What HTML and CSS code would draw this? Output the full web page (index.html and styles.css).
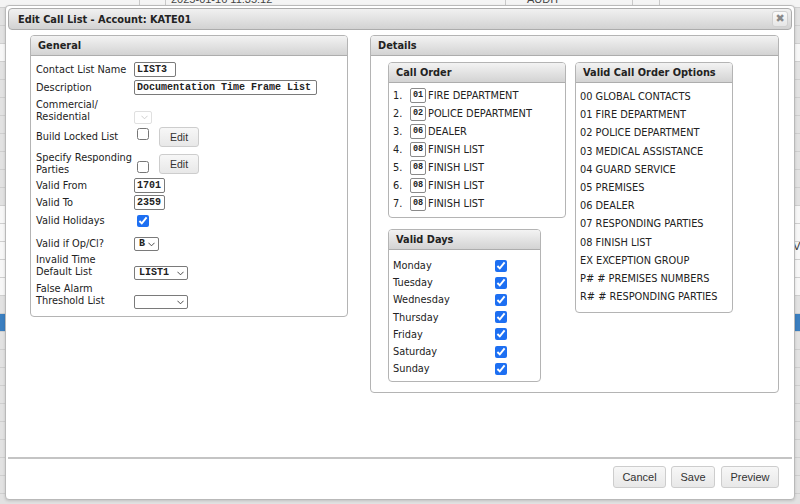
FILE: index.html
```html
<!DOCTYPE html>
<html>
<head>
<meta charset="utf-8">
<link rel="stylesheet" href="styles.css">
</head>
<body>
<div class="page">
  <div class="pg-row pg-top">
    <span class="pc pc1"></span><span class="pc pc2"></span><span class="pc pc3">2025-01-16 11:35:12</span><span class="pc pc4">AUDIT</span><span class="pc pc5"></span><span class="pc pc6"></span>
  </div>
  <div class="pg-row"></div>
  <div class="pg-row"></div>
  <div class="pg-row pg-white"></div>
  <div class="pg-row"></div>
  <div class="pg-row"></div>
  <div class="pg-row"></div>
  <div class="pg-row"></div>
  <div class="pg-row"></div>
  <div class="pg-row"></div>
  <div class="pg-row"></div>
  <div class="pg-row"></div>
  <div class="pg-row pg-white"></div>
  <div class="pg-row pg-white"></div>
  <div class="pg-row pg-text">Valid</div>
  <div class="pg-row pg-white"></div>
  <div class="pg-row pg-white"></div>
  <div class="pg-row"></div>
  <div class="pg-row pg-blue"></div>
  <div class="pg-row"></div>
  <div class="pg-row"></div>
  <div class="pg-row"></div>
  <div class="pg-row"></div>
  <div class="pg-row"></div>
  <div class="pg-row"></div>
  <div class="pg-row"></div>
  <div class="pg-row"></div>
  <div class="pg-row"></div>
  <div class="pg-row"></div>
</div>

<div class="dialog">
  <div class="titlebar">
    <span class="title">Edit Call List - Account: KATE01</span>
    <span class="close">✖</span>
  </div>

  <div class="content">
    <section class="panel general">
      <div class="panel-head">General</div>
      <div class="panel-body form">
        <div class="frow">
          <label class="flabel">Contact List Name</label>
          <span class="tinput w42">LIST3</span>
        </div>
        <div class="frow">
          <label class="flabel">Description</label>
          <span class="tinput w183">Documentation Time Frame List</span>
        </div>
        <div class="frow two r3">
          <label class="flabel">Commercial/<br>Residential</label>
          <span class="sel sel-dis w18"><svg class="chev" viewBox="0 0 8 5" width="7" height="5"><path d="M0.5 0.5 L4 4 L7.5 0.5" fill="none" stroke="#c8c8c8" stroke-width="1"/></svg></span>
        </div>
        <div class="frow r4">
          <label class="flabel">Build Locked List</label>
          <span class="ctrls"><input type="checkbox" class="cb cb-up"><button class="btn edit">Edit</button></span>
        </div>
        <div class="frow two r5">
          <label class="flabel">Specify Responding<br>Parties</label>
          <span class="ctrls"><input type="checkbox" class="cb cb-down"><button class="btn edit">Edit</button></span>
        </div>
        <div class="frow">
          <label class="flabel">Valid From</label>
          <span class="tinput w31">1701</span>
        </div>
        <div class="frow r7">
          <label class="flabel">Valid To</label>
          <span class="tinput w31">2359</span>
        </div>
        <div class="frow r8">
          <label class="flabel">Valid Holidays</label>
          <span class="ctrls"><input type="checkbox" class="cb" checked></span>
        </div>
        <div class="frow r9">
          <label class="flabel">Valid if Op/Cl?</label>
          <span class="sel w25">B<svg class="chev" viewBox="0 0 8 5" width="7" height="5"><path d="M0.5 0.5 L4 4 L7.5 0.5" fill="none" stroke="#333" stroke-width="1"/></svg></span>
        </div>
        <div class="frow two low">
          <label class="flabel">Invalid Time<br>Default List</label>
          <span class="sel w54">LIST1<svg class="chev" viewBox="0 0 8 5" width="7" height="5"><path d="M0.5 0.5 L4 4 L7.5 0.5" fill="none" stroke="#333" stroke-width="1"/></svg></span>
        </div>
        <div class="frow two low">
          <label class="flabel">False Alarm<br>Threshold List</label>
          <span class="sel w54"><svg class="chev" viewBox="0 0 8 5" width="7" height="5"><path d="M0.5 0.5 L4 4 L7.5 0.5" fill="none" stroke="#333" stroke-width="1"/></svg></span>
        </div>
      </div>
    </section>

    <section class="panel details">
      <div class="panel-head">Details</div>
      <div class="panel-body details-body">
        <div class="dcol">
          <section class="panel sub callorder">
            <div class="panel-head">Call Order</div>
            <div class="panel-body co-body">
              <div class="co-row"><span class="num">1.</span><span class="code">01</span><span>FIRE DEPARTMENT</span></div>
              <div class="co-row"><span class="num">2.</span><span class="code">02</span><span>POLICE DEPARTMENT</span></div>
              <div class="co-row"><span class="num">3.</span><span class="code">06</span><span>DEALER</span></div>
              <div class="co-row"><span class="num">4.</span><span class="code">08</span><span>FINISH LIST</span></div>
              <div class="co-row"><span class="num">5.</span><span class="code">08</span><span>FINISH LIST</span></div>
              <div class="co-row"><span class="num">6.</span><span class="code">08</span><span>FINISH LIST</span></div>
              <div class="co-row"><span class="num">7.</span><span class="code">08</span><span>FINISH LIST</span></div>
            </div>
          </section>
          <section class="panel sub days">
            <div class="panel-head">Valid Days</div>
            <div class="panel-body days-body">
              <div class="day"><span class="dname">Monday</span><input type="checkbox" class="cb" checked></div>
              <div class="day"><span class="dname">Tuesday</span><input type="checkbox" class="cb" checked></div>
              <div class="day"><span class="dname">Wednesday</span><input type="checkbox" class="cb" checked></div>
              <div class="day"><span class="dname">Thursday</span><input type="checkbox" class="cb" checked></div>
              <div class="day"><span class="dname">Friday</span><input type="checkbox" class="cb" checked></div>
              <div class="day"><span class="dname">Saturday</span><input type="checkbox" class="cb" checked></div>
              <div class="day"><span class="dname">Sunday</span><input type="checkbox" class="cb" checked></div>
            </div>
          </section>
        </div>
        <section class="panel sub options">
          <div class="panel-head">Valid Call Order Options</div>
          <ul class="panel-body opt-list">
            <li>00 GLOBAL CONTACTS</li>
            <li>01 FIRE DEPARTMENT</li>
            <li>02 POLICE DEPARTMENT</li>
            <li>03 MEDICAL ASSISTANCE</li>
            <li>04 GUARD SERVICE</li>
            <li>05 PREMISES</li>
            <li>06 DEALER</li>
            <li>07 RESPONDING PARTIES</li>
            <li>08 FINISH LIST</li>
            <li>EX EXCEPTION GROUP</li>
            <li>P# # PREMISES NUMBERS</li>
            <li>R# # RESPONDING PARTIES</li>
          </ul>
        </section>
      </div>
    </section>
  </div>

  <div class="footer">
    <button class="btn fbtn b-cancel">Cancel</button>
    <button class="btn fbtn b-save">Save</button>
    <button class="btn fbtn b-preview">Preview</button>
  </div>
</div>
</body>
</html>
```

FILE: styles.css
```css
* { box-sizing: border-box; }

html, body {
  margin: 0;
  padding: 0;
  width: 800px;
  height: 504px;
  overflow: hidden;
}

body {
  background: #e4e4e4;
  font-family: "DejaVu Sans", Verdana, sans-serif;
  font-size: 10px;
  color: #222;
  position: relative;
}

/* ---------- background page ---------- */
.page {
  display: flex;
  flex-direction: column;
  margin-top: -10px;
}
.pg-row {
  flex: none;
  height: 18px;
  background: #e2e2e2;
  border-bottom: 1px solid #cfcfcf;
  display: flex;
}
.pg-top {
  background: #f4f4f4;
  font-family: "Liberation Sans", Arial, sans-serif;
  font-size: 11px;
  color: #444;
}
.pg-white { background: #f7f7f7; }
.pg-blue { background: #3b7fc0; }
.pg-text {
  padding-left: 793px;
  font-size: 11px;
  color: #444;
  line-height: 10px;
  background: #f7f7f7;
}
.pc { height: 100%; border-right: 1px solid #c9c9c9; line-height: 18px; }
.pc1 { width: 140px; }
.pc2 { width: 26px; }
.pc3 { width: 340px; padding-left: 5px; }
.pc4 { width: 127px; padding-left: 21px; }
.pc5 { width: 27px; }
.pc6 { flex: 1; border-right: none; }

/* ---------- dialog ---------- */
.dialog {
  position: absolute;
  left: 5px;
  top: 5px;
  width: 790px;
  height: 495px;
  background: #fff;
  border: 1px solid #b9b9b9;
  border-radius: 4px;
  padding: 2px;
  display: flex;
  flex-direction: column;
  box-shadow: 0 1px 3px rgba(0,0,0,0.15);
}

.titlebar {
  height: 22px;
  border: 1px solid #acacac;
  border-radius: 4px;
  background: linear-gradient(#f1f1f1, #d2d2d2);
  display: flex;
  align-items: center;
  justify-content: space-between;
  padding: 0 3px 0 9px;
  flex: none;
}
.title {
  font-weight: bold;
  font-size: 9.8px;
  color: #222;
}
.close {
  width: 16px;
  height: 16px;
  border: 1px solid #d0d0d0;
  border-radius: 3px;
  background: linear-gradient(#fafafa, #e6e6e6);
  color: #8a8a8a;
  font-size: 11px;
  line-height: 14px;
  text-align: center;
}

.content {
  flex: 1;
  display: flex;
  align-items: flex-start;
  gap: 22px;
  padding: 5px 0 0 22px;
}

/* ---------- panels ---------- */
.panel {
  border: 1px solid #b4b4b4;
  border-radius: 4px;
  background: #fff;
  overflow: hidden;
}
.panel-head {
  height: 20px;
  line-height: 19px;
  background: linear-gradient(#f3f3f3, #d3d3d3);
  border-bottom: 1px solid #adadad;
  font-weight: bold;
  font-size: 9.8px;
  color: #222;
  padding-left: 7px;
}
.panel-body { margin: 0; }

.general { width: 318px; }
.details { width: 409px; }

/* ---------- general form ---------- */
.form {
  display: flex;
  flex-direction: column;
  gap: 3px;
  padding: 6px 0 7px 5px;
}
.frow {
  display: flex;
  align-items: center;
}
.frow.low { align-items: flex-end; height: 26px; }
.frow.low .flabel { align-self: flex-start; }
.frow.r3 { margin-top: 1px; align-items: flex-end; height: 25px; }
.frow.r3 .flabel { align-self: flex-start; }
.frow.r4 { height: 20px; }
.frow.r5 { margin-top: 2px; height: 23px; }
.frow.r7 { margin-top: -1px; }
.frow.r8 { margin-top: 1px; height: 14px; }
.frow.r9 { margin-top: 6px; }
.flabel {
  width: 98px;
  flex: none;
  line-height: 12px;
  font-size: 9.8px;
  color: #222;
}
.tinput {
  height: 15px;
  border: 1px solid #7a7a7a;
  border-radius: 2px;
  font-family: "Liberation Mono", "Courier New", monospace;
  font-weight: bold;
  font-size: 10px;
  line-height: 13px;
  padding: 0 2px;
  color: #222;
  white-space: nowrap;
  overflow: hidden;
}
.w31 { width: 31px; }
.w42 { width: 42px; }
.w183 { width: 183px; }
.sel {
  height: 14px;
  border: 1px solid #7a7a7a;
  border-radius: 2px;
  font-family: "Liberation Mono", "Courier New", monospace;
  font-weight: bold;
  font-size: 10px;
  line-height: 12px;
  padding: 0 3px 0 4px;
  display: flex;
  align-items: center;
  justify-content: space-between;
  color: #222;
}
.sel-dis { border-color: #e0e0e0; height: 13px; }
.sel .chev { margin-left: auto; flex: none; }
.w18 { width: 18px; padding: 0 3px 0 5px; }
.w25 { width: 25px; }
.w54 { width: 54px; }

.ctrls { display: flex; align-items: center; }
.cb {
  width: 12px;
  height: 12px;
  margin: 0 0 0 3px;
  accent-color: #1d6ff2;
}
.cb-up { margin-top: -6px; }
.cb-down { margin-top: 6px; }

.btn {
  font-family: "Liberation Sans", Arial, sans-serif;
  border: 1px solid #cdcdcd;
  border-radius: 3px;
  background: linear-gradient(#f7f7f7, #e8e8e8);
  color: #333;
  padding: 0;
}
.edit {
  width: 40px;
  height: 20px;
  margin-left: 10px;
  font-size: 10.5px;
}

/* ---------- details ---------- */
.details-body {
  display: flex;
  align-items: flex-start;
  gap: 9px;
  padding: 6px 0 10px 17px;
}
.dcol {
  display: flex;
  flex-direction: column;
  gap: 11px;
}
.callorder { width: 178px; }
.co-body {
  display: flex;
  flex-direction: column;
  gap: 3px;
  padding: 5px 0 6px 4px;
}
.co-row {
  display: flex;
  align-items: center;
  height: 15px;
  font-size: 9.8px;
  white-space: nowrap;
}
.num { width: 17px; }
.code {
  width: 16px;
  height: 15px;
  border: 1px solid #8a8a8a;
  border-radius: 2px;
  font-family: "Liberation Mono", monospace;
  font-weight: bold;
  font-size: 8.5px;
  line-height: 13px;
  text-align: center;
  color: #222;
  margin-right: 2px;
}

.days { width: 153px; }
.days-body {
  padding: 7px 0 4px 4px;
}
.day {
  display: flex;
  align-items: center;
  height: 17.2px;
}
.dname { width: 102px; font-size: 9.8px; }
.day .cb { margin: 0; }

.options { width: 158px; }
.opt-list {
  list-style: none;
  padding: 5px 0 6px 4px;
  margin: 0;
}
.opt-list li {
  line-height: 18.2px;
  font-size: 9.8px;
  white-space: nowrap;
}

/* ---------- footer ---------- */
.footer {
  flex: none;
  height: 40px;
  border-top: 2px solid #c4c4c4;
  display: flex;
  justify-content: flex-end;
  align-items: flex-start;
  gap: 4px;
  padding: 7px 13px 0 0;
}
.fbtn {
  height: 22px;
  font-size: 11px;
  padding: 0;
}
.b-cancel { width: 53px; }
.b-save { width: 44px; margin-left: 1px; }
.b-preview { width: 58px; margin-left: 2px; }
```
